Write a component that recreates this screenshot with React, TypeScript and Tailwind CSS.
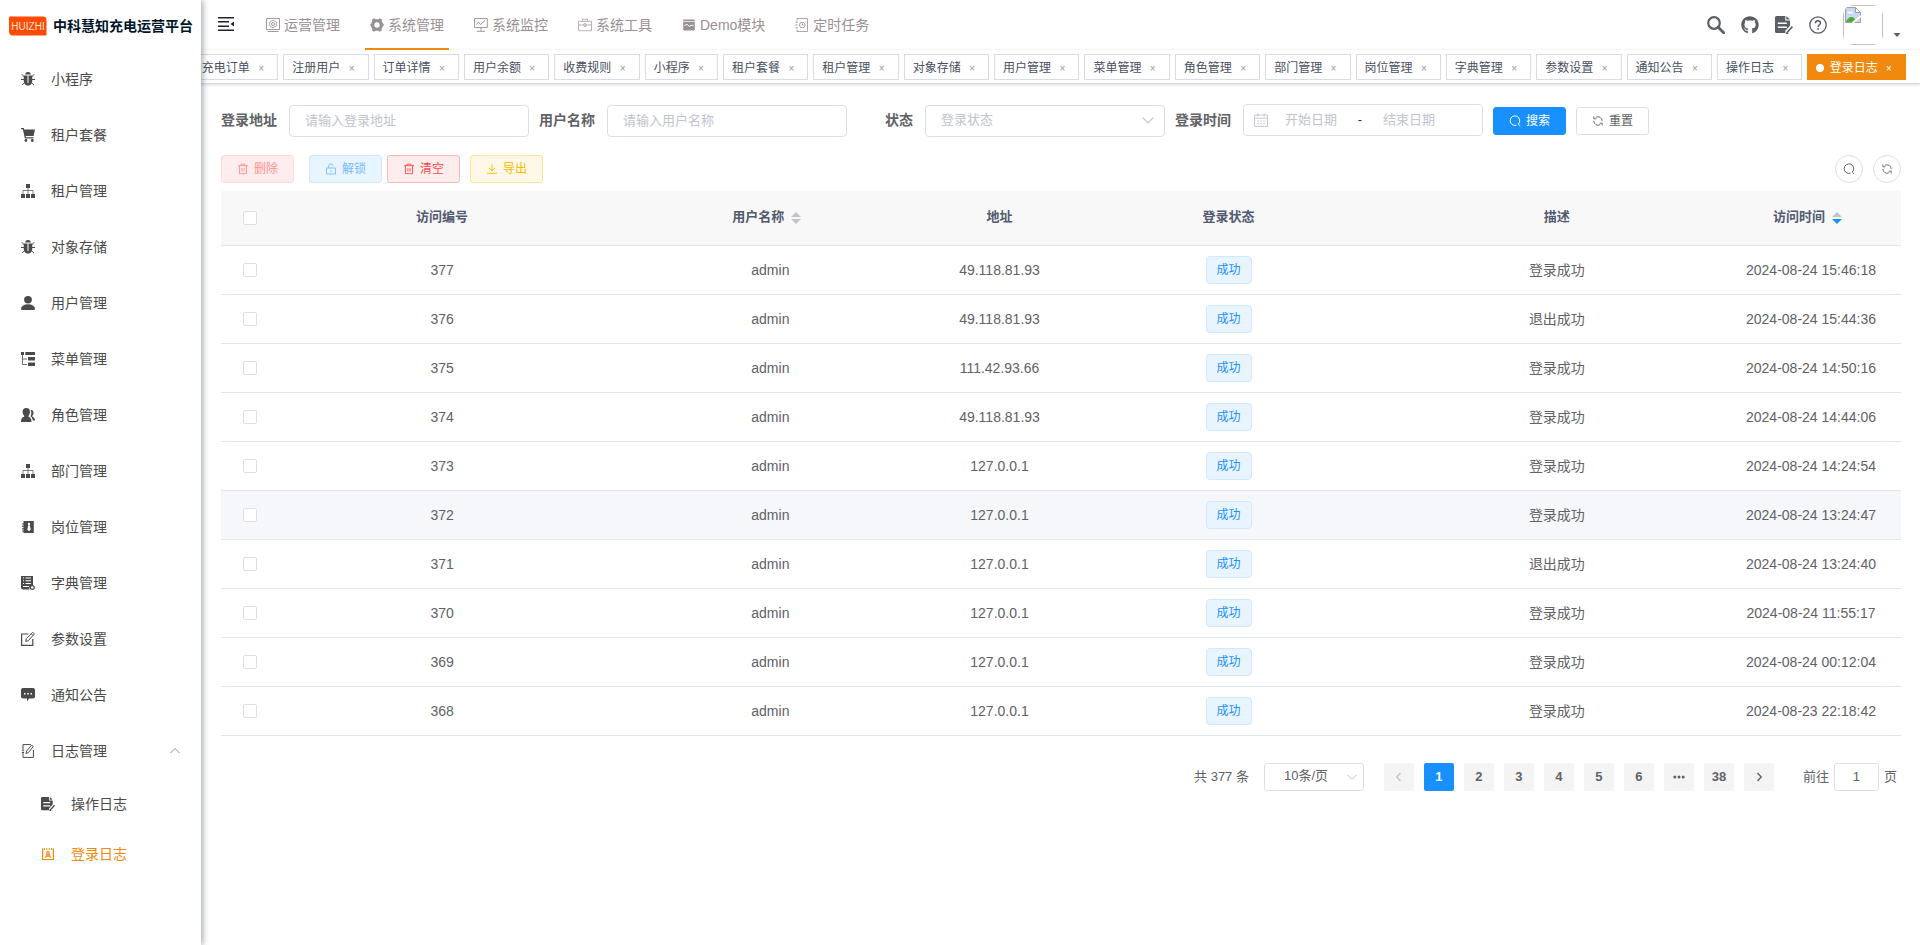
import type { ReactNode } from 'react';
import clsx from 'clsx';
import { FaGithub } from 'react-icons/fa';

type IconProps = { className?: string };

function Svg({ className = 'size-3.5', box = 14, children }: IconProps & { box?: number; children: ReactNode }) {
  return (
    <svg className={clsx('shrink-0', className)} viewBox={`0 0 ${box} ${box}`} fill="currentColor" aria-hidden="true">
      {children}
    </svg>
  );
}

const line = { fill: 'none', stroke: 'currentColor' };

const BugIcon = (p: IconProps) => (
  <Svg {...p}>
    <path d="M4.200 2.600a2.800 2.600 0 0 1 5.600 0z" />
    <path d="M2.800 3.600h3.700v7.500h1V3.600h3.700v6A4 4 0 0 1 7 13.500a4 4 0 0 1-4.200-3.900z" />
    <path d="M.8 2.200 3.400 5M13.200 2.200 10.600 5M0 7.500h3.400M14 7.500h-3.400M1 13.200l2.800-2.800M13 13.200l-2.800-2.800" {...line} />
  </Svg>
);

const CartIcon = (p: IconProps) => (
  <Svg {...p}>
    <path d="M0 0h2.800l.4 1.600H14L12.600 8H4.700l.3 1.200h7.600v1.300H3.900L1.800 1.300H0z" />
    <circle cx="4.900" cy="12.500" r="1.400" />
    <circle cx="11.300" cy="12.500" r="1.400" />
  </Svg>
);

const TreeIcon = (p: IconProps) => (
  <Svg {...p}>
    <path d="M5 0h4v4H5zM0 10h4v4H0zM5 10h4v4H5zM10 10h4v4h-4z" />
    <path d="M7 4v6M2 10V6.500h10V10" {...line} strokeWidth={0.7} />
  </Svg>
);

const UserIcon = (p: IconProps) => (
  <Svg {...p}>
    <ellipse cx="7" cy="3.700" rx="3.900" ry="3.700" />
    <path d="M0 12.500C.5 9.800 3 8.200 7 8.200s6.500 1.600 7 4.300c.1.900-.3 1.500-1.200 1.500H1.200C.3 14-.1 13.400 0 12.500z" />
  </Svg>
);

const TreeTableIcon = (p: IconProps) => (
  <Svg {...p}>
    <path d="M0 0h3v3H0zM4.300 0H14v3H4.300zM7 5h7v3.500H7zM7 10.500h7V14H7z" />
    <path d="M1.500 3v9.500H6M1.500 7H6" {...line} strokeWidth={0.8} />
  </Svg>
);

const PeoplesIcon = (p: IconProps) => (
  <Svg {...p}>
    <path d="M5.300 0C7.700 0 9 1.600 9 3.800c0 1.700-.6 3-1.500 3.900v1.100c1.800.6 3 1.900 3 5.200H0c0-3.300 1.300-4.600 3.200-5.200V7.700C2.300 6.800 1.600 5.500 1.600 3.800 1.600 1.600 2.900 0 5.300 0z" />
    <path d="M9.500 1.700c1.900 0 3 1.200 3 3 0 1.400-.5 2.300-1.200 3v.9c1.600.8 2.700 1.700 2.700 3.900h-2.200c-.3-2.200-1.100-3.400-2.400-4.200 1.200-1.900 1.300-4.500.1-6.600z" />
  </Svg>
);

const PostIcon = (p: IconProps) => (
  <Svg {...p}>
    <path fillRule="evenodd" d="M2.500 1h10.300v12H2.500v-1.500H1v-1h1.500V9.200H1v-1h1.500V6.800H1v-1h1.500V4.500H1v-1h1.500zM7.500 2.800 6.600 4l.8 1-1.200 4.500 1.800 1.800 1.800-1.800L8.600 5l.8-1-.9-1.200z" />
  </Svg>
);

const DictIcon = (p: IconProps) => (
  <Svg {...p}>
    <path fillRule="evenodd" d="M0 0h12v9.500a3 3 0 0 0-3.500 4.000H2a2 2 0 0 1-2-2zM2 1.500v1h1v-1zm2.500 0v1H10v-1zM2 4.200v1h1v-1zm2.500 0v1H10v-1zM2 6.900v1h1v-1zm2.500 0v1H10v-1zM2 10v1.000h6V10z" />
    <circle cx="11.300" cy="11.500" r="1.900" {...line} strokeWidth={1.2} />
  </Svg>
);

const EditIcon = (p: IconProps) => (
  <Svg {...p}>
    <path d="M7.500 2H.6v11.400h11.200V7" {...line} strokeWidth={1.200} />
    <path d="m4.800 9.400.5-2.800 6-6c.6-.5 2.400 1 1.700 1.800L7.300 8.700zM10.200 1.700l2 2" {...line} strokeWidth={1} />
  </Svg>
);

const MessageIcon = (p: IconProps) => (
  <Svg {...p}>
    <path fillRule="evenodd" d="M2 0h10a2 2 0 0 1 2 2v6.500a2 2 0 0 1-2 2H8L6 13.500v-3H2a2 2 0 0 1-2-2V2a2 2 0 0 1 2-2zM3 5v1.500h1.500V5zm3.200 0v1.500h1.600V5zm3.300 0v1.500H11V5z" />
  </Svg>
);

const LogIcon = (p: IconProps) => (
  <Svg {...p}>
    <path d="M2 2V.6h8M12.400 6v7.400H2V12M2 4v1M2 6.500v1M2 9v1M.8 3H3M.8 6H3M.8 8.500H3M.8 11H3" {...line} />
    <path d="m5 9.500.5-2.500 5-5.500c.6-.5 2 .7 1.500 1.400L7.300 8.700z" {...line} />
  </Svg>
);

const FormIcon = (p: IconProps) => (
  <Svg {...p}>
    <path fillRule="evenodd" d="M1.200 0H8v3.500h3.700v4L8 11.500V13.300H1.200A1.200 1.200 0 0 1 0 12.100V1.200A1.200 1.200 0 0 1 1.200 0zM2.200 5v1.200h7V5zm0 3.200v1.200h7V8.200z" />
    <path d="M8.800 0 11.600 2.700H8.800z" />
    <path d="M9 13.200 13.600 8.300M8.200 14h2.200" {...line} strokeWidth={1.3} />
  </Svg>
);

const LoginLogIcon = (p: IconProps) => (
  <Svg {...p}>
    <path d="M1.600 2v10.500h10.800V2" {...line} strokeWidth={1.2} />
    <path d="M3.500 1v2M5.800 1v2M8.200 1v2M10.500 1v2M1 1.800h1.500M11.500 1.800H13" {...line} strokeWidth={0.9} />
    <circle cx="7" cy="6" r="1.300" {...line} strokeWidth={1.200} />
    <path d="M4.500 10.800 6.200 7M9.500 10.800 7.800 7M5.500 9.200h3" {...line} strokeWidth={1.200} />
  </Svg>
);

const ServerIcon = (p: IconProps) => (
  <Svg {...p}>
    <path d="M.5.500h13v11H.5zM1.500 13.500h11" {...line} strokeWidth={0.9} />
    <path d="m7 2.200 3.300 1.900v3.800L7 9.800 3.700 7.900V4.100z" {...line} strokeWidth={0.8} />
    <circle cx="7" cy="6" r="1.500" {...line} strokeWidth={0.9} />
  </Svg>
);

const SystemIcon = (p: IconProps) => (
  <Svg {...p}>
    <path fillRule="evenodd" d="m4.200.3 1.200 1h3.200l1.200-1 2.200 1.300-.3 1.600 1.500 2.500L14 7l-1.000 1.300-1.500 2.500.3 1.600-2.200 1.300-1.200-1H5.400l-1.200 1L2 12.400l.3-1.600L1 8.300 0 7l1-1.300 1.300-2.500L2 1.600zM7 4.300a2.700 2.700 0 1 0 0 5.400 2.700 2.700 0 0 0 0-5.400z" />
  </Svg>
);

const MonitorIcon = (p: IconProps) => (
  <Svg {...p}>
    <path d="M.5.500h12.800v9H.5zM7 9.500v3.500M3 13.300h8" {...line} strokeWidth={0.9} />
    <path d="m2.500 6.500 2-2.300 2 2.300L11 2.500" {...line} strokeWidth={0.9} />
  </Svg>
);

const ToolIcon = (p: IconProps) => (
  <Svg {...p}>
    <path d="M.5 3.300h13v9.400H.5zM4.500 3V1.200h5V3M.5 7H6M8 7h5.500M6 5.800h2v2.500H6z" {...line} strokeWidth={0.7} />
  </Svg>
);

const DemoIcon = (p: IconProps) => (
  <Svg {...p}>
    <path d="M2 1.500h10a.8.8 0 0 1 .8.800v1H1.200v-1a.8.8 0 0 1 .8-.8zM1.200 4h11.600v7.700a.8.800 0 0 1-.8.800H2a.8.800 0 0 1-.8-.8z" />
    <path d="M2.500 7.500 5 6.200l2.300 2.300L9 7.300h2.500" fill="none" stroke="#fff" strokeWidth={1} />
  </Svg>
);

const JobIcon = (p: IconProps) => (
  <Svg {...p}>
    <path d="M2 2.500V.5h10.500v13H2v-2M2 4v1M2 6.500v1M2 9v1M.5 4h1.800M.5 7h1.800M.5 10h1.800" {...line} strokeWidth={0.8} />
    <circle cx="7.300" cy="7" r="2.800" {...line} strokeWidth={0.9} />
    <path d="M7.300 5.500V7h1.300" {...line} />
  </Svg>
);

const SearchBoldIcon = () => (
  <Svg className="size-4.5" box={18}>
    <circle cx="7" cy="7" r="5.800" {...line} strokeWidth={2.2} />
    <path d="m11.200 11.200 5.500 5.500" {...line} strokeWidth={2.8} strokeLinecap="round" />
  </Svg>
);

const QuestionIcon = () => (
  <Svg className="size-4.5" box={18}>
    <circle cx="9" cy="9" r="8.200" {...line} strokeWidth={1.3} />
    <path d="M6.500 7.300C6.500 5.600 7.500 4.700 9 4.700s2.500.9 2.500 2.300c0 1.700-2.400 1.900-2.400 4" {...line} strokeWidth={1.4} />
    <circle cx="9.100" cy="12.900" r=".9" />
  </Svg>
);

const HamburgerIcon = () => (
  <Svg className="size-5" box={20}>
    <path d="M2 2h16v1.500H2zM2 6h11v1.500H2zM2 10.500h11V12H2zM2 14.500h16V16H2zM18 6.500v5L14.500 9z" />
  </Svg>
);

// Outline icons of the small buttons
const SearchIcon = (p: IconProps) => (
  <Svg {...p} box={12}>
    <path d="M7.500 10.200A4.800 4.800 0 1 1 9.300 9.100L11.300 11" {...line} />
  </Svg>
);

const RefreshIcon = (p: IconProps) => (
  <Svg {...p} box={12}>
    <path d="M3.800 2.300a4.300 4.300 0 0 1 6.400 3.900M8.200 9.700a4.300 4.300 0 0 1-6.400-3.900M1.800 1.500v2.300h2.500M10.200 10.500V8.200H7.700" {...line} strokeWidth={0.9} />
  </Svg>
);

const TrashIcon = (p: IconProps) => (
  <Svg {...p} box={12}>
    <path d="M1 2.700h10M4 2.500V1.200h4v1.300M2.500 2.700v8h7v-8M4.900 5v3.500M7.100 5v3.500" {...line} strokeWidth={0.9} />
  </Svg>
);

const UnlockIcon = (p: IconProps) => (
  <Svg {...p} box={12}>
    <path d="M1.500 5h9v6h-9zM3.700 5V3.300a2.300 2.300 0 0 1 4.500-.7M6 7.200v2" {...line} strokeWidth={0.9} />
  </Svg>
);

const DownloadIcon = (p: IconProps) => (
  <Svg {...p} box={12}>
    <path d="M6 1.500v6M2.800 4.800 6 7.700l3.200-2.900M1 10.300h10" {...line} strokeWidth={0.9} />
  </Svg>
);

const CalendarIcon = (p: IconProps) => (
  <Svg {...p}>
    <path d="M.5 2h13v11.500H.5zM.5 5.200h13M3.800.3v3M10.200.3v3M3 8h2M6 8h2M9 8h2M3 10.700h2M6 10.700h2M9 10.700h2" {...line} strokeWidth={0.9} />
  </Svg>
);

const ChevronIcon = ({ className, d = 'm1.500 4 4.500 4.500L10.500 4', weight = 1 }: IconProps & { d?: string; weight?: number }) => (
  <Svg className={className} box={12}>
    <path d={d} {...line} strokeWidth={weight} />
  </Svg>
);

const sideMenu = [
  { label: '小程序', Icon: BugIcon },
  { label: '租户套餐', Icon: CartIcon },
  { label: '租户管理', Icon: TreeIcon },
  { label: '对象存储', Icon: BugIcon },
  { label: '用户管理', Icon: UserIcon },
  { label: '菜单管理', Icon: TreeTableIcon },
  { label: '角色管理', Icon: PeoplesIcon },
  { label: '部门管理', Icon: TreeIcon },
  { label: '岗位管理', Icon: PostIcon },
  { label: '字典管理', Icon: DictIcon },
  { label: '参数设置', Icon: EditIcon },
  { label: '通知公告', Icon: MessageIcon },
];

const topMenu = [
  { label: '运营管理', Icon: ServerIcon },
  { label: '系统管理', Icon: SystemIcon, active: true },
  { label: '系统监控', Icon: MonitorIcon },
  { label: '系统工具', Icon: ToolIcon },
  { label: 'Demo模块', Icon: DemoIcon },
  { label: '定时任务', Icon: JobIcon },
];

const tags = [
  '充电订单', '注册用户', '订单详情', '用户余额', '收费规则', '小程序', '租户套餐', '租户管理', '对象存储', '用户管理',
  '菜单管理', '角色管理', '部门管理', '岗位管理', '字典管理', '参数设置', '通知公告', '操作日志', '登录日志',
];

const rows = [
  { id: 377, ip: '49.118.81.93', msg: '登录成功', time: '2024-08-24 15:46:18' },
  { id: 376, ip: '49.118.81.93', msg: '退出成功', time: '2024-08-24 15:44:36' },
  { id: 375, ip: '111.42.93.66', msg: '登录成功', time: '2024-08-24 14:50:16' },
  { id: 374, ip: '49.118.81.93', msg: '登录成功', time: '2024-08-24 14:44:06' },
  { id: 373, ip: '127.0.0.1', msg: '登录成功', time: '2024-08-24 14:24:54' },
  { id: 372, ip: '127.0.0.1', msg: '登录成功', time: '2024-08-24 13:24:47', hover: true },
  { id: 371, ip: '127.0.0.1', msg: '退出成功', time: '2024-08-24 13:24:40' },
  { id: 370, ip: '127.0.0.1', msg: '登录成功', time: '2024-08-24 11:55:17' },
  { id: 369, ip: '127.0.0.1', msg: '登录成功', time: '2024-08-24 00:12:04' },
  { id: 368, ip: '127.0.0.1', msg: '登录成功', time: '2024-08-23 22:18:42' },
];

const pages = ['1', '2', '3', '4', '5', '6', '•••', '38'];

const inputClass =
  'h-8 w-60 rounded border border-[#dcdfe6] bg-white px-[15px] pb-0.5 text-[13px] text-[#606266] placeholder:text-[#c0c4cc] outline-none';
const labelClass = 'w-[68px] pr-3 text-right text-sm leading-[30px] font-bold text-[#606266]';
const buttonClass = 'flex h-7 w-[73px] items-center justify-center gap-[5px] rounded-[3px] border text-xs';

function Sidebar() {
  return (
    <aside className="z-10 w-[201px] shrink-0 bg-white text-sm text-[#4a4a4a] shadow-[2px_0_6px_rgba(0,21,41,0.35)]">
      <a href="#" className="flex h-[51px] items-center gap-1.5 pl-[9px] text-[#001529]">
        <svg className="h-5 w-[38px] shrink-0" viewBox="0 0 38 20" aria-hidden="true">
          <path d="M3 .5h31a3.500 3.500 0 0 1 3.500 3.500v15.500H4a4 4 0 0 1-4-4V2.500a2 2 0 0 1 3-2z" fill="#ff4a02" />
          <text x="19" y="13.500" textAnchor="middle" fontSize="10" fontFamily="Liberation Sans, sans-serif" fill="#ffe3d6">
            HUIZHI
          </text>
        </svg>
        <h1 className="font-bold whitespace-nowrap">中科慧知充电运营平台</h1>
      </a>
      <nav>
        {sideMenu.map(({ label, Icon }) => (
          <a key={label} href="#" className="flex h-14 items-center gap-4 pb-px pl-[21px]">
            <Icon />
            {label}
          </a>
        ))}
        <button type="button" className="flex h-14 w-full items-center gap-4 pr-5 pb-px pl-[21px]">
          <LogIcon />
          日志管理
          <ChevronIcon d="m1.500 8 4.500-4.500L10.500 8" className="ml-auto size-3 text-[#909399]" />
        </button>
        <a href="#" className="flex h-[50px] items-center gap-4 pb-px pl-[41px]">
          <FormIcon />
          操作日志
        </a>
        <a href="#" className="flex h-[50px] items-center gap-4 pb-px pl-[41px] text-[#f0890d]">
          <LoginLogIcon />
          登录日志
        </a>
      </nav>
    </aside>
  );
}

function Navbar() {
  return (
    <header className="flex h-[50px] justify-between shadow-[0_1px_4px_rgba(0,21,41,0.08)]">
      <div className="flex">
        <button type="button" aria-label="收起菜单" className="mx-[15px] text-[#1f2226]">
          <HamburgerIcon />
        </button>
        <nav className="ml-2.5 flex gap-5 text-sm text-[#999093]">
          {topMenu.map(({ label, Icon, active }) => (
            <a
              key={label}
              href="#"
              className={clsx(
                'flex items-center gap-1 border-b-2 px-[5px] pt-px whitespace-nowrap',
                active ? 'border-[#f0890d]' : 'border-transparent',
              )}
            >
              <Icon />
              {label}
            </a>
          ))}
        </nav>
      </div>
      <div className="flex items-center gap-4 pr-[19px] text-[#5a5e66]">
        <button type="button" aria-label="搜索菜单"><SearchBoldIcon /></button>
        <a href="#" aria-label="源码地址"><FaGithub className="size-4.5" /></a>
        <a href="#" aria-label="文档地址"><FormIcon className="size-4.5" /></a>
        <a href="#" aria-label="帮助"><QuestionIcon /></a>
        <button type="button" aria-label="用户菜单" className="flex items-end gap-2.5">
          <span className="size-10 overflow-hidden rounded-[10px]">
            <span className="flex size-10 border border-[#c0c0c0] p-px">
              <svg className="size-4" viewBox="0 0 16 16" aria-hidden="true">
                <path d="M.5.500h10l5 5v10H.5z" fill="#c6d8f5" stroke="#a0a0a0" />
                <path d="M10.500.500v5h5z" fill="#fff" stroke="#a0a0a0" />
                <path d="M2.500 6.500a1.500 1.500 0 0 1 2.500-1.500 1.800 1.800 0 0 1 3 1.500z" fill="#fff" />
                <path d="M1 15c1-3 3-5 5.500-5s3.500 2 4.500 5z" fill="#4fa83a" />
                <path d="m7.500 16 8.500-7" stroke="#fff" strokeWidth="2" />
              </svg>
            </span>
          </span>
          <svg className="mb-2 h-1 w-2" viewBox="0 0 8 4" fill="currentColor" aria-hidden="true">
            <path d="M.5 0h7L4 4z" />
          </svg>
        </button>
      </div>
    </header>
  );
}

function TagsView() {
  return (
    <div className="flex h-[34px] justify-end gap-[5px] overflow-hidden border-b border-[#d8dce5] bg-white pt-1 pr-3.5 text-xs shadow-[0_1px_3px_rgba(0,0,0,0.12),0_0_3px_rgba(0,0,0,0.04)]">
      {tags.map((tag) => {
        const active = tag === '登录日志';
        return (
          <a
            key={tag}
            href="#"
            className={clsx(
              'h-[26px] shrink-0 border px-2 leading-[26px] whitespace-nowrap',
              active ? 'border-[#f0890d] bg-[#f0890d] text-white' : 'border-[#d8dce5] bg-white text-[#495060]',
            )}
          >
            {active && <span className="mr-0.5 inline-block size-2 rounded-full bg-white" />}
            {active && ' '}
            {tag}{' '}
            <span className={clsx('inline-block w-4 text-center text-[10px]', active ? 'text-white' : 'text-[#999]')}>×</span>
          </a>
        );
      })}
    </div>
  );
}

function SearchForm() {
  return (
    <form className="flex h-[33px] items-end gap-2.5" onSubmit={(e) => e.preventDefault()}>
      <div className="flex">
        <label htmlFor="ipaddr" className={labelClass}>登录地址</label>
        <input id="ipaddr" placeholder="请输入登录地址" className={inputClass} />
      </div>
      <div className="flex">
        <label htmlFor="userName" className={labelClass}>用户名称</label>
        <input id="userName" placeholder="请输入用户名称" className={inputClass} />
      </div>
      <div className="flex">
        <label htmlFor="status" className={labelClass}>状态</label>
        <div className="relative">
          <select id="status" defaultValue="" className={clsx(inputClass, 'appearance-none !text-[#c0c4cc]')}>
            <option value="">登录状态</option>
            <option value="0">成功</option>
            <option value="1">失败</option>
          </select>
          <ChevronIcon className="pointer-events-none absolute top-2 right-2.5 size-3.5 text-[#c0c4cc]" />
        </div>
      </div>
      <div className="flex self-start">
        <label htmlFor="beginTime" className={clsx(labelClass, 'pt-px')}>登录时间</label>
        <div className="flex h-8 w-60 items-center rounded border border-[#dcdfe6] px-2.5 text-[13px]">
          <CalendarIcon className="size-3.5 text-[#c0c4cc]" />
          <input id="beginTime" placeholder="开始日期" className="w-[86px] text-center outline-none placeholder:text-[#c0c4cc]" />
          <span className="w-3 text-center text-[#303133]">-</span>
          <input aria-label="结束日期" placeholder="结束日期" className="w-[86px] text-center outline-none placeholder:text-[#c0c4cc]" />
        </div>
      </div>
      <div className="flex gap-2.5 pb-0.5">
        <button type="submit" className={clsx(buttonClass, 'border-[#1890ff] bg-[#1890ff] text-white')}>
          <SearchIcon className="size-3" />
          搜索
        </button>
        <button type="reset" className={clsx(buttonClass, 'border-[#dcdfe6] bg-white text-[#606266]')}>
          <RefreshIcon className="size-3" />
          重置
        </button>
      </div>
    </form>
  );
}

function Toolbar() {
  const round = 'flex size-7 items-center justify-center rounded-full border border-[#dcdfe6] text-[#606266]';
  return (
    <div className="mt-[18px] mb-2 flex">
      <button type="button" disabled className={clsx(buttonClass, 'border-[#ffdbdb] bg-[#ffeded] text-[#ff9292]')}>
        <TrashIcon className="size-3" />
        删除
      </button>
      <button type="button" disabled className={clsx(buttonClass, 'ml-[15px] border-[#d1e9ff] bg-[#e8f4ff] text-[#74bcff]')}>
        <UnlockIcon className="size-3" />
        解锁
      </button>
      <button type="button" className={clsx(buttonClass, 'ml-[5px] border-[#ffb6b6] bg-[#ffeded] text-[#ff4949]')}>
        <TrashIcon className="size-3" />
        清空
      </button>
      <button type="button" className={clsx(buttonClass, 'ml-2.5 border-[#ffe399] bg-[#fff8e6] text-[#ffba00]')}>
        <DownloadIcon className="size-3" />
        导出
      </button>
      <div className="ml-auto flex gap-2.5">
        <button type="button" aria-label="隐藏搜索" className={round}><SearchIcon className="size-3" /></button>
        <button type="button" aria-label="刷新" className={round}><RefreshIcon className="size-3" /></button>
      </div>
    </div>
  );
}

function SortHeader({ label, desc }: { label: string; desc?: boolean }) {
  return (
    <button type="button" className="font-bold">
      {label}
      <span className="inline-flex h-[34px] w-6 items-center justify-center align-middle">
        <svg className="h-3 w-2.5" viewBox="0 0 10 12" aria-hidden="true">
          <path d="M0 5h10L5 0z" fill="#c0c4cc" />
          <path d="M0 7h10l-5 5z" fill={desc ? '#1890ff' : '#c0c4cc'} />
        </svg>
      </span>
    </button>
  );
}

function Checkbox({ label }: { label: string }) {
  return (
    <input
      type="checkbox"
      aria-label={label}
      className="mx-auto block size-3.5 appearance-none rounded-xs border border-[#dcdfe6] bg-white"
    />
  );
}

function LogTable() {
  return (
    <table className="w-full table-fixed text-center text-sm text-[#606266]">
      <thead>
        <tr className="h-[54px] border-b border-[#dfe6ec] bg-[#f8f8f9] text-[13px] text-[#515a6e]">
          <th className="w-[57px]"><Checkbox label="全选" /></th>
          <th>访问编号</th>
          <th><SortHeader label="用户名称" /></th>
          <th className="w-[130px]">地址</th>
          <th>登录状态</th>
          <th>描述</th>
          <th className="w-[180px]"><SortHeader label="访问时间" desc /></th>
        </tr>
      </thead>
      <tbody>
        {rows.map((r) => (
          <tr key={r.id} className={clsx('h-[49px] border-b border-[#dfe6ec]', r.hover && 'bg-[#f5f7fa]')}>
            <td><Checkbox label={`选择 ${r.id}`} /></td>
            <td>{r.id}</td>
            <td>admin</td>
            <td>{r.ip}</td>
            <td>
              <span className="inline-block h-7 rounded border border-[#d1e9ff] bg-[#e8f4ff] px-2.5 align-middle text-xs leading-[26px] text-[#1890ff]">
                成功
              </span>
            </td>
            <td>{r.msg}</td>
            <td>{r.time}</td>
          </tr>
        ))}
      </tbody>
    </table>
  );
}

function Pagination() {
  const pageClass = 'flex h-7 w-[30px] items-center justify-center rounded-xs font-bold';
  return (
    <div className="mt-[27px] flex items-center justify-end pr-1 text-[13px] text-[#606266]">
      <span>共 377 条</span>
      <div className="relative mr-5 ml-[15px]">
        <select aria-label="每页条数" className="h-7 w-[100px] appearance-none rounded-[3px] border border-[#dcdfe6] pb-0.5 pl-[19px] outline-none">
          <option>10条/页</option>
          <option>20条/页</option>
        </select>
        <ChevronIcon className="pointer-events-none absolute top-2 right-1.5 size-3 text-[#c0c4cc]" />
      </div>
      <div className="flex gap-2.5">
        <button type="button" disabled aria-label="上一页" className={clsx(pageClass, 'bg-[#f4f4f5] text-[#c0c4cc]')}>
          <ChevronIcon d="M7.500 2 3.800 6l3.700 4" weight={1.4} className="size-3" />
        </button>
        {pages.map((p) =>
          p === '•••' ? (
            <button key={p} type="button" aria-label="向后 5 页" className={clsx(pageClass, 'bg-[#f4f4f5]')}>
              <Svg className="size-3" box={12}>
                <circle cx="1.800" cy="6" r="1.500" />
                <circle cx="6" cy="6" r="1.500" />
                <circle cx="10.200" cy="6" r="1.500" />
              </Svg>
            </button>
          ) : (
            <button key={p} type="button" className={clsx(pageClass, p === '1' ? 'bg-[#1890ff] text-white' : 'bg-[#f4f4f5]')}>
              {p}
            </button>
          ),
        )}
        <button type="button" aria-label="下一页" className={clsx(pageClass, 'bg-[#f4f4f5]')}>
          <ChevronIcon d="M4.500 2 8.200 6l-3.700 4" weight={1.4} className="size-3" />
        </button>
      </div>
      <label className="ml-[29px] flex items-center gap-[5px]">
        前往
        <input defaultValue="1" className="h-7 w-[45px] rounded-[3px] border border-[#dcdfe6] text-center outline-none" />
        页
      </label>
    </div>
  );
}

export default function App() {
  return (
    <div className="flex min-h-screen overflow-hidden bg-white font-['Liberation_Sans','Noto_Sans_CJK_SC',sans-serif]">
      <Sidebar />
      <div className="min-w-0 flex-1">
        <Navbar />
        <TagsView />
        <main className="py-5 pr-[19px] pl-5">
          <SearchForm />
          <Toolbar />
          <LogTable />
          <Pagination />
        </main>
      </div>
    </div>
  );
}
